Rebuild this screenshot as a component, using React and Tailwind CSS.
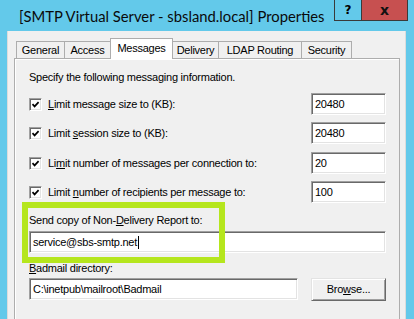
import React from "react";

const tabs = [
    { label: "General", w: "w-[48px]" },
    { label: "Access", w: "w-[46px]" },
    { label: "Messages", w: "w-[63px]", active: true },
    { label: "Delivery", w: "w-[45px]", afterActive: true },
    { label: "LDAP Routing", w: "w-[83px]" },
    { label: "Security", w: "w-[51px]", last: true },
];

const limits = [
    { pre: "", key: "L", post: "imit message size to (KB):", value: "20480", gap: "mt-[9px]" },
    { pre: "Limit ", key: "s", post: "ession size to (KB):", value: "20480", gap: "mt-[7px]" },
    { pre: "Li", key: "m", post: "it number of messages per connection to:", value: "20", gap: "mt-[8px]" },
    { pre: "Limit ", key: "n", post: "umber of recipients per message to:", value: "100", gap: "mt-[7px]" },
];

const inputCls =
    "bg-white h-[22px] border border-t-[#a0a0a0] border-l-[#a0a0a0] border-r-white border-b-white shadow-[inset_1px_1px_0_#696969,inset_-1px_-1px_0_#e3e3e3] pl-[3px] flex items-center text-black";

const Checkbox = () => (
    <div className="w-[13px] h-[13px] bg-white border border-t-[#a0a0a0] border-l-[#a0a0a0] border-r-white border-b-white shadow-[inset_1px_1px_0_#696969,inset_-1px_-1px_0_#e3e3e3] flex items-center justify-center shrink-0">
        <svg width="9" height="9" viewBox="0 0 9 9">
            <path d="M1.5 4.2 L3.6 6.4 L7.6 2.2" fill="none" stroke="#000" strokeWidth="1.7" />
        </svg>
    </div>
);

const App = () => {
    return (
        <div className="relative w-[414px] h-[319px] overflow-hidden bg-[#63c9ea] font-['Liberation_Sans',Arial,sans-serif] text-[11px] leading-[13px] tracking-[-0.25px] text-black">
            {/* title bar */}
            <div className="flex h-[31px]">
                <div className="pl-[19px] pt-[6px] whitespace-nowrap font-['Lato',sans-serif] text-[14.8px] leading-[20px] tracking-normal text-[#0a0a0a]">
                    [SMTP Virtual Server - sbsland.local] Properties
                </div>
                <div className="ml-auto mr-[6px] flex h-[21px] border border-t-0 border-[#3a3a3a]">
                    <div className="w-[26px] flex items-center justify-center font-['DejaVu_Sans',sans-serif] font-bold text-[12px] tracking-normal">?</div>
                    <div className="w-[46px] bg-[#c75050] border-l border-[#3a3a3a] flex items-center justify-center font-['DejaVu_Sans',sans-serif] font-bold text-[14px] tracking-normal text-[#111]">x</div>
                </div>
            </div>

            {/* dialog body */}
            <div className="ml-[7px] mr-[8px] h-[288px] bg-[#f0f0f0] border-l border-r border-[#dcdcdc] pl-[6px] pr-[5px] pt-[7px]">
                <div className="flex items-end h-[20px] pl-[2px]">
                    {tabs.map((t) => (
                        <div
                            key={t.label}
                            className={
                                t.active
                                    ? `${t.w} h-[21px] -mb-px relative z-10 bg-white border border-b-0 border-[#adadad] flex items-center justify-center pb-[1px]`
                                    : `${t.w} h-[17px] bg-[#f0f0f0] border-t ${t.afterActive ? "" : "border-l"} ${t.last ? "border-r" : ""} border-[#adadad] flex items-center justify-center`
                            }
                        >
                            {t.label}
                        </div>
                    ))}
                </div>

                <div className="h-[300px] border border-[#adadad] bg-[#f0f0f0] shadow-[inset_1px_1px_0_#fff] pl-[14px] pr-[13px] pt-[12px]">
                    <div>Specify the following messaging information.</div>

                    {limits.map((r) => (
                        <div key={r.post} className={`${r.gap} flex items-center h-[22px]`}>
                            <Checkbox />
                            <span className="ml-[6px]">
                                {r.pre}<u>{r.key}</u>{r.post}
                            </span>
                            <div className={`${inputCls} ml-auto w-[75px]`}>{r.value}</div>
                        </div>
                    ))}

                    <div className="mt-[11px]">
                        Send copy of Non-<u>D</u>elivery Report to:
                    </div>
                    <div className={`${inputCls} mt-[4px] w-full`}>
                        service@sbs-smtp.net
                        <span className="inline-block w-px h-[13px] bg-black ml-[1px]" />
                    </div>

                    <div className="mt-[9px]">
                        <u>B</u>admail directory:
                    </div>
                    <div className="mt-[3px] flex items-start">
                        <div className={`${inputCls} w-[269px]`}>C:\inetpub\mailroot\Badmail</div>
                        <button className="ml-auto w-[75px] h-[23px] bg-[#f0f0f0] border border-t-[#e3e3e3] border-l-[#e3e3e3] border-r-[#696969] border-b-[#696969] shadow-[inset_1px_1px_0_#fff,inset_-1px_-1px_0_#a0a0a0] flex items-center justify-center">
                            Bro<u>w</u>se...
                        </button>
                    </div>
                </div>
            </div>

            {/* highlight annotation */}
            <div className="absolute left-[22px] top-[202px] w-[203px] h-[61px] border-[6px] border-[#b5e61d] z-20 pointer-events-none" />
        </div>
    );
};

export default App;
